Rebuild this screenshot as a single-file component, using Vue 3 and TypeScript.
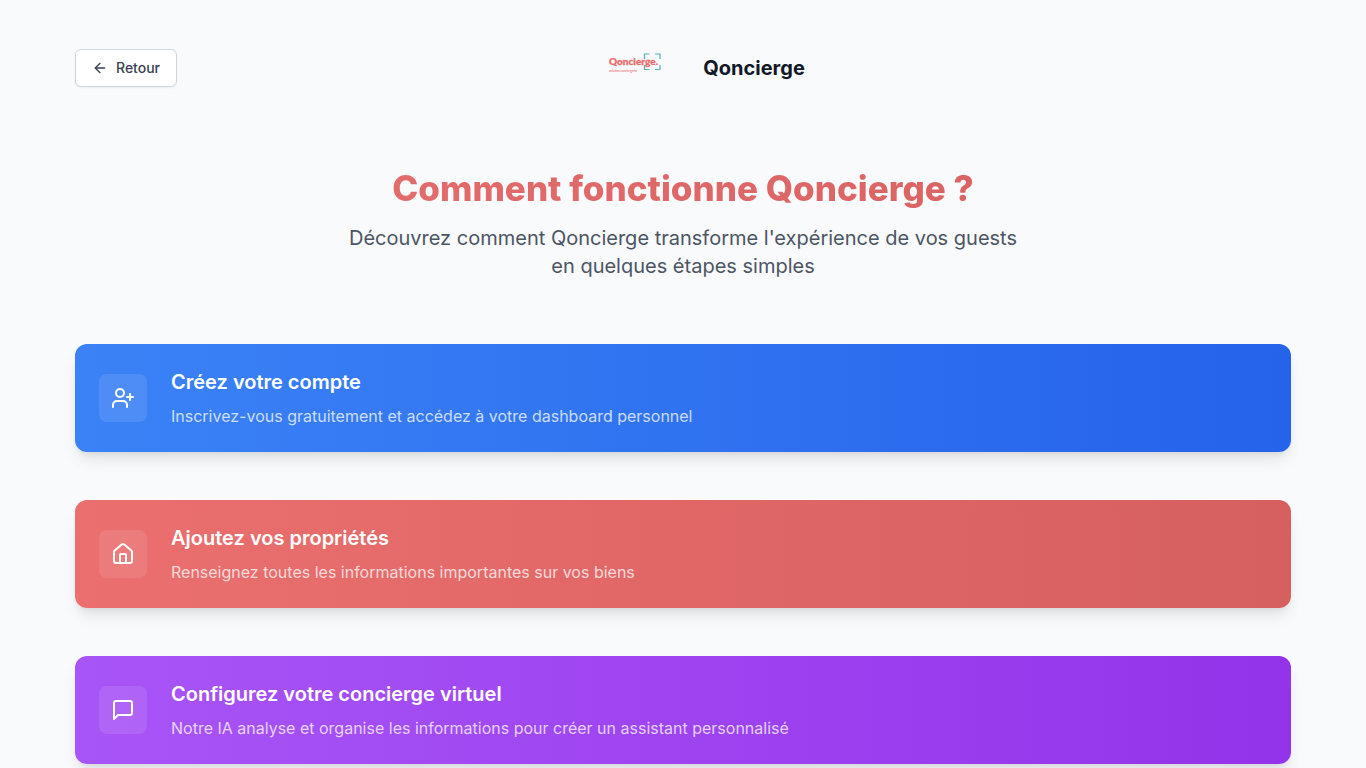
<script setup lang="ts">
interface Step {
  title: string
  text: string
  tone: string
  icon: string[]
}

const steps: Step[] = [
  {
    title: 'Créez votre compte',
    text: 'Inscrivez-vous gratuitement et accédez à votre dashboard personnel',
    tone: 'blue',
    icon: [
      'M16 21v-2a4 4 0 0 0-4-4H6a4 4 0 0 0-4 4v2',
      'M13 7a4 4 0 1 1-8 0a4 4 0 1 1 8 0z',
      'M19 8v6',
      'M22 11h-6',
    ],
  },
  {
    title: 'Ajoutez vos propriétés',
    text: 'Renseignez toutes les informations importantes sur vos biens',
    tone: 'coral',
    icon: [
      'M15 21v-8a1 1 0 0 0-1-1h-4a1 1 0 0 0-1 1v8',
      'M3 10a2 2 0 0 1 .709-1.528l7-5.999a2 2 0 0 1 2.582 0l7 5.999A2 2 0 0 1 21 10v9a2 2 0 0 1-2 2H5a2 2 0 0 1-2-2z',
    ],
  },
  {
    title: 'Configurez votre concierge virtuel',
    text: 'Notre IA analyse et organise les informations pour créer un assistant personnalisé',
    tone: 'purple',
    icon: ['M21 15a2 2 0 0 1-2 2H7l-4 4V5a2 2 0 0 1 2-2h14a2 2 0 0 1 2 2z'],
  },
]

function goBack(): void {
  window.history.back()
}
</script>

<template>
  <div class="page">
    <div class="container">
      <header class="header">
        <button type="button" class="back" @click="goBack">
          <svg class="back-icon" viewBox="0 0 24 24" aria-hidden="true">
            <path d="m12 19-7-7 7-7" />
            <path d="M19 12H5" />
          </svg>
          Retour
        </button>
        <div class="brand">
          <svg class="logo" viewBox="0 0 128 72" role="img" aria-label="Qoncierge">
            <path
              class="frame"
              d="M77.500 27v-5h5M88 22h5v5M93 33v4.500h-5M82.500 37.500h-5v-4.500"
            />
            <text class="logo-name" x="42" y="33">Qoncierge.</text>
            <text class="logo-tag" x="42" y="40">solution conciergerie</text>
          </svg>
          <span class="brand-name">Qoncierge</span>
        </div>
        <div class="spacer"></div>
      </header>

      <main>
        <section class="intro">
          <h1>Comment fonctionne Qoncierge ?</h1>
          <p>
            Découvrez comment Qoncierge transforme l'expérience de vos guests en
            quelques étapes simples
          </p>
        </section>

        <div class="steps">
          <article v-for="step in steps" :key="step.title" class="card" :class="step.tone">
            <div class="tile">
              <svg viewBox="0 0 24 24" aria-hidden="true">
                <path v-for="d in step.icon" :key="d" :d="d" />
              </svg>
            </div>
            <div>
              <h2>{{ step.title }}</h2>
              <p>{{ step.text }}</p>
            </div>
          </article>
        </div>
      </main>
    </div>
  </div>
</template>

<style>
body {
  margin: 0;
  background: #f9fafc;
}
</style>

<style scoped>
.page {
  min-height: 100vh;
  box-sizing: border-box;
  overflow: hidden;
  background: #f9fafc;
  color: #111827;
  font-family: Inter, "Liberation Sans", sans-serif;
}
.container {
  max-width: 1280px;
  margin: 0 auto;
  padding: 32px 32px 0;
  box-sizing: border-box;
}
.header {
  display: flex;
  align-items: center;
  justify-content: space-between;
  margin-bottom: 64px;
}
.back {
  display: inline-flex;
  align-items: center;
  gap: 8px;
  padding: 8px 16px;
  border: 1px solid #d1d5db;
  border-radius: 6px;
  background: #fff;
  box-shadow: 0 1px 2px rgba(0, 0, 0, 0.05);
  color: #374151;
  font: 500 14px/20px Inter, "Liberation Sans", sans-serif;
  cursor: pointer;
}
.back-icon {
  width: 16px;
  height: 16px;
}
svg {
  display: block;
}
.back-icon,
.tile svg {
  fill: none;
  stroke: currentColor;
  stroke-width: 2;
  stroke-linecap: round;
  stroke-linejoin: round;
}
.brand {
  display: flex;
  align-items: center;
  gap: 8px;
}
.logo {
  width: 128px;
  height: 72px;
}
.frame {
  fill: none;
  stroke: #58aeb2;
  stroke-width: 1.2;
}
.logo-name {
  fill: #eb6b6b;
  stroke: #eb6b6b;
  stroke-width: 0.3;
  font: 900 10px Lato, sans-serif;
}
.logo-tag {
  fill: #ee8585;
  font: 700 3px Lato, sans-serif;
}
.brand-name {
  font-size: 20px;
  line-height: 28px;
  font-weight: 700;
}
.spacer {
  width: 96px;
}
.intro {
  margin-bottom: 64px;
  text-align: center;
}
h1 {
  margin: 0 0 16px;
  font-size: 35px;
  line-height: 40px;
  font-weight: 800;
  background: linear-gradient(to right, #e76f6f, #d65f5f);
  -webkit-background-clip: text;
  background-clip: text;
  color: transparent;
}
.intro p {
  max-width: 672px;
  margin: 0 auto;
  color: #4b5563;
  font-size: 20px;
  line-height: 28px;
}
.steps {
  display: grid;
  gap: 48px;
}
.card {
  display: flex;
  align-items: center;
  gap: 24px;
  padding: 24px;
  border-radius: 12px;
  box-shadow: 0 10px 15px -3px rgba(0, 0, 0, 0.1), 0 4px 6px -4px rgba(0, 0, 0, 0.1);
  color: #fff;
}
.blue {
  background: linear-gradient(to right, #3b82f6, #2563eb);
}
.coral {
  background: linear-gradient(to right, #eb6f6f, #d65f5f);
}
.purple {
  background: linear-gradient(to right, #a855f7, #9333ea);
}
.tile {
  padding: 12px;
  border-radius: 8px;
  background: rgba(255, 255, 255, 0.1);
}
.tile svg {
  width: 24px;
  height: 24px;
}
h2 {
  margin: 0 0 8px;
  font-size: 20px;
  line-height: 28px;
  font-weight: 600;
}
.card p {
  margin: 0;
  color: rgba(255, 255, 255, 0.75);
  font-size: 16px;
  line-height: 24px;
}
</style>
